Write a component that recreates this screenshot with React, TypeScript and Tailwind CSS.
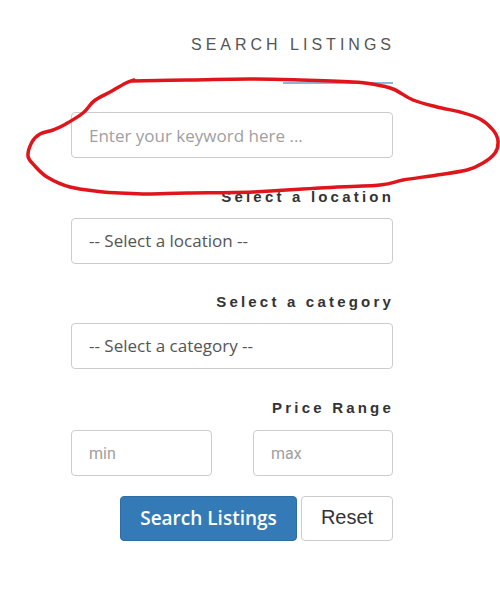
import { FC } from "react";

// hand-drawn red ring around the keyword field
const ringPoints: [number, number][] = [
  [132, 81], [187, 80], [250, 79], [300, 80], [353, 82], [372, 84], [393, 89],
  [413, 100], [437, 107], [460, 112], [480, 119], [493, 130], [498, 141],
  [495, 153], [483, 163], [467, 170], [437, 175], [403, 180], [380, 185],
  [320, 188], [253, 192], [187, 193], [147, 194], [120, 193], [103, 192],
  [70, 187], [47, 177], [34, 165], [28, 156], [32, 142], [40, 134], [53, 130],
  [64, 125], [83, 113], [94, 101], [110, 92], [126, 83], [134, 80],
];

const smoothPath = (pts: [number, number][]) => {
  let d = `M${pts[0][0]},${pts[0][1]}`;
  for (let i = 0; i < pts.length - 1; i++) {
    const p0 = pts[i - 1] || pts[i];
    const p1 = pts[i];
    const p2 = pts[i + 1];
    const p3 = pts[i + 2] || p2;
    const c1x = p1[0] + (p2[0] - p0[0]) / 6;
    const c1y = p1[1] + (p2[1] - p0[1]) / 6;
    const c2x = p2[0] - (p3[0] - p1[0]) / 6;
    const c2y = p2[1] - (p3[1] - p1[1]) / 6;
    d += ` C${c1x},${c1y} ${c2x},${c2y} ${p2[0]},${p2[1]}`;
  }
  return d;
};

const labelClass =
  "mr-[-1px] text-right text-[15px] font-bold leading-5 tracking-[3.2px] text-[#333] [font-family:'Liberation_Sans',Arial,sans-serif]";

const fieldClass =
  "block h-[46px] w-full rounded-[4px] border border-[#ccc] bg-white px-[17px] outline-none";

const App: FC = () => {
  return (
    <div className="relative h-[593px] w-[500px] overflow-hidden bg-white">
      <div className="ml-[71px] flex w-[322px] flex-col pt-[34px]">
        <h2 className="mr-[-2px] text-right text-[16px] font-normal leading-[22px] tracking-[4px] text-[#555] [font-family:'Liberation_Sans',Arial,sans-serif]">
          SEARCH LISTINGS
        </h2>
        <div className="mt-[26px] h-[2px] w-[110px] self-end bg-[#8db4dc]" />

        <input
          className={`${fieldClass} mt-[28px] text-[17px] text-[#555] placeholder:text-[#a0a0a0] [font-family:'Open_Sans',sans-serif]`}
          placeholder="Enter your keyword here ..."
        />

        <label className={`${labelClass} mt-[29px]`}>Select a location</label>
        <div
          className={`${fieldClass} mt-[11px] flex items-center text-[17px] text-[#555] [font-family:'Open_Sans',sans-serif]`}
        >
          -- Select a location --
        </div>

        <label className={`${labelClass} mt-[28px]`}>Select a category</label>
        <div
          className={`${fieldClass} mt-[11px] flex items-center text-[17px] text-[#555] [font-family:'Open_Sans',sans-serif]`}
        >
          -- Select a category --
        </div>

        <label className={`${labelClass} mt-[29px]`}>Price Range</label>
        <div className="mt-[12px] flex justify-between">
          <input
            className={`${fieldClass} !w-[141px] text-[16px] placeholder:text-[#a0a0a0] [font-family:Roboto,sans-serif]`}
            placeholder="min"
          />
          <input
            className={`${fieldClass} !w-[140px] text-[16px] placeholder:text-[#a0a0a0] [font-family:Roboto,sans-serif]`}
            placeholder="max"
          />
        </div>

        <div className="mt-[20px] flex justify-end gap-[4px]">
          <button className="h-[45px] w-[177px] rounded-[4px] border border-[#2e6da4] bg-[#337ab7] text-[19px] font-semibold text-white [font-family:'Open_Sans',sans-serif]">
            Search Listings
          </button>
          <button className="h-[45px] w-[92px] rounded-[4px] border border-[#ccc] bg-white pb-[4px] text-[20px] text-[#333] [font-family:'Liberation_Sans',Arial,sans-serif]">
            Reset
          </button>
        </div>
      </div>

      <svg
        className="pointer-events-none absolute left-0 top-0"
        width="500"
        height="593"
        viewBox="0 0 500 593"
      >
        <path
          d={smoothPath(ringPoints)}
          fill="none"
          stroke="#e0151c"
          strokeWidth="3.5"
          strokeLinecap="round"
          strokeLinejoin="round"
        />
      </svg>
    </div>
  );
};

export default App;
